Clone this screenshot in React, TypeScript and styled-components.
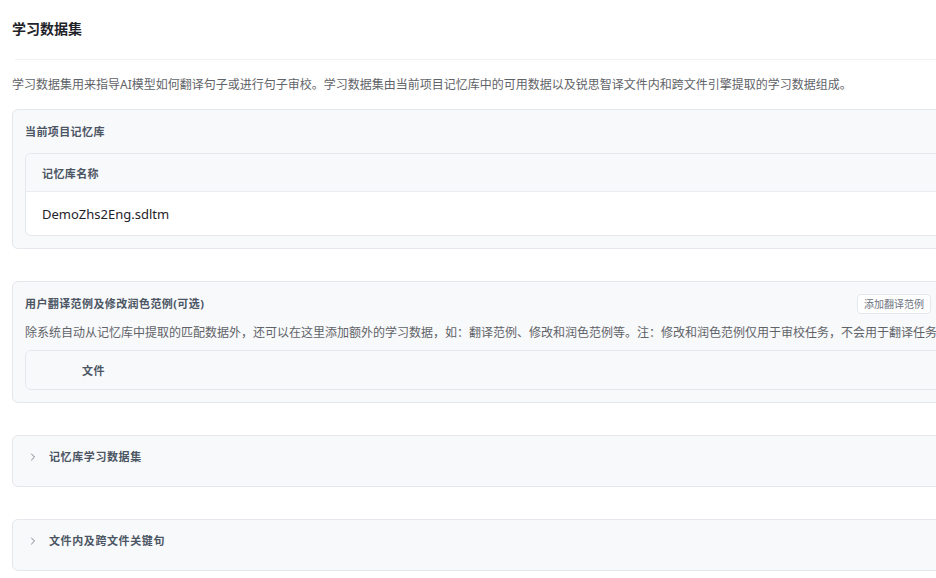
import React from "react";
import styled, { createGlobalStyle } from "styled-components";
import { ChevronRight } from "lucide-react";

const GlobalStyle = createGlobalStyle`
  html, body {
    margin: 0;
    padding: 0;
    background: #fff;
    overflow: hidden;
  }
  body {
    font-family: "Noto Sans", "Noto Sans CJK SC", sans-serif;
    color: #303133;
  }
`;

// page wrapper, wider than the window so the cards run off the right edge
const Page = styled.div`
  width: 950px;
  padding: 19px 12px 0 12px;
`;

const Title = styled.h1`
  margin: 0;
  font-size: 14px;
  line-height: 20px;
  font-weight: 700;
  color: #1f2329;
`;

const Divider = styled.div`
  height: 1px;
  background: #f0f1f3;
  margin: 20px 0 0 3px;
`;

const Intro = styled.p`
  margin: 16px 0 0 0;
  font-size: 12px;
  line-height: 18px;
  color: #5f6368;
  white-space: nowrap;
`;

const Card = styled.section<{ $top: number }>`
  margin-top: ${(p) => p.$top}px;
  background: #f8f9fb;
  border: 1px solid #e4e7ec;
  border-radius: 6px;
  padding: 12px;
`;

const CardHead = styled.div`
  display: flex;
  align-items: center;
  justify-content: space-between;
  height: 20px;
`;

const CardTitle = styled.h2`
  margin: 0;
  font-size: 11px;
  line-height: 16px;
  font-weight: 700;
  letter-spacing: 0.4px;
  color: #4b5563;
`;

const SmallButton = styled.button`
  height: 20px;
  margin-right: 18px;
  padding: 0 6px;
  font-family: inherit;
  font-size: 10px;
  line-height: 18px;
  color: #6b7280;
  background: #fff;
  border: 1px solid #e4e7ec;
  border-radius: 4px;
  cursor: pointer;
`;

const CardText = styled.p`
  margin: 10px 0 0 0;
  font-size: 12px;
  line-height: 18px;
  color: #5f6368;
  white-space: nowrap;
  overflow: hidden;
`;

const Table = styled.div<{ $top: number }>`
  margin-top: ${(p) => p.$top}px;
  border: 1px solid #e4e7ec;
  border-radius: 6px;
  overflow: hidden;
  background: #fff;
`;

const HeadRow = styled.div<{ $h: number; $pad: number; $last?: boolean }>`
  display: flex;
  align-items: center;
  height: ${(p) => p.$h}px;
  padding-left: ${(p) => p.$pad}px;
  background: #f8f9fb;
  border-bottom: ${(p) => (p.$last ? "none" : "1px solid #e9ecf0")};
  font-size: 11px;
  font-weight: 700;
  letter-spacing: 0.4px;
  color: #4b5563;
`;

const BodyRow = styled.div`
  display: flex;
  align-items: center;
  height: 43px;
  padding-left: 16px;
  font-size: 13px;
  color: #1f2329;
`;

const Collapse = styled.section`
  margin-top: 32px;
  height: 52px;
  box-sizing: border-box;
  background: #f8f9fb;
  border: 1px solid #e4e7ec;
  border-radius: 6px;
  padding: 13px 12px 0 14px;
`;

const CollapseHead = styled.div`
  display: flex;
  align-items: center;
  gap: 10px;
  height: 16px;
  color: #4b5563;
  cursor: pointer;
`;

const CollapseTitle = styled.span`
  font-size: 11px;
  line-height: 16px;
  font-weight: 700;
  letter-spacing: 0.6px;
`;

const sections = ["记忆库学习数据集", "文件内及跨文件关键句"];

export default function App() {
  return (
    <>
      <GlobalStyle />
      <Page>
        <Title>学习数据集</Title>
        <Divider />
        <Intro>
          学习数据集用来指导AI模型如何翻译句子或进行句子审校。学习数据集由当前项目记忆库中的可用数据以及锐思智译文件内和跨文件引擎提取的学习数据组成。
        </Intro>

        <Card $top={15}>
          <CardHead>
            <CardTitle>当前项目记忆库</CardTitle>
          </CardHead>
          <Table $top={11}>
            <HeadRow $h={37} $pad={16}>
              记忆库名称
            </HeadRow>
            <BodyRow>DemoZhs2Eng.sdltm</BodyRow>
          </Table>
        </Card>

        <Card $top={32}>
          <CardHead>
            <CardTitle>用户翻译范例及修改润色范例(可选)</CardTitle>
            <SmallButton>添加翻译范例</SmallButton>
          </CardHead>
          <CardText>
            除系统自动从记忆库中提取的匹配数据外，还可以在这里添加额外的学习数据，如：翻译范例、修改和润色范例等。注：修改和润色范例仅用于审校任务，不会用于翻译任务。
          </CardText>
          <Table $top={8}>
            <HeadRow $h={38} $pad={56} $last>
              文件
            </HeadRow>
          </Table>
        </Card>

        {sections.map((s) => (
          <Collapse key={s}>
            <CollapseHead>
              <ChevronRight size={12} strokeWidth={1.8} color="#6b7280" />
              <CollapseTitle>{s}</CollapseTitle>
            </CollapseHead>
          </Collapse>
        ))}
      </Page>
    </>
  );
}
